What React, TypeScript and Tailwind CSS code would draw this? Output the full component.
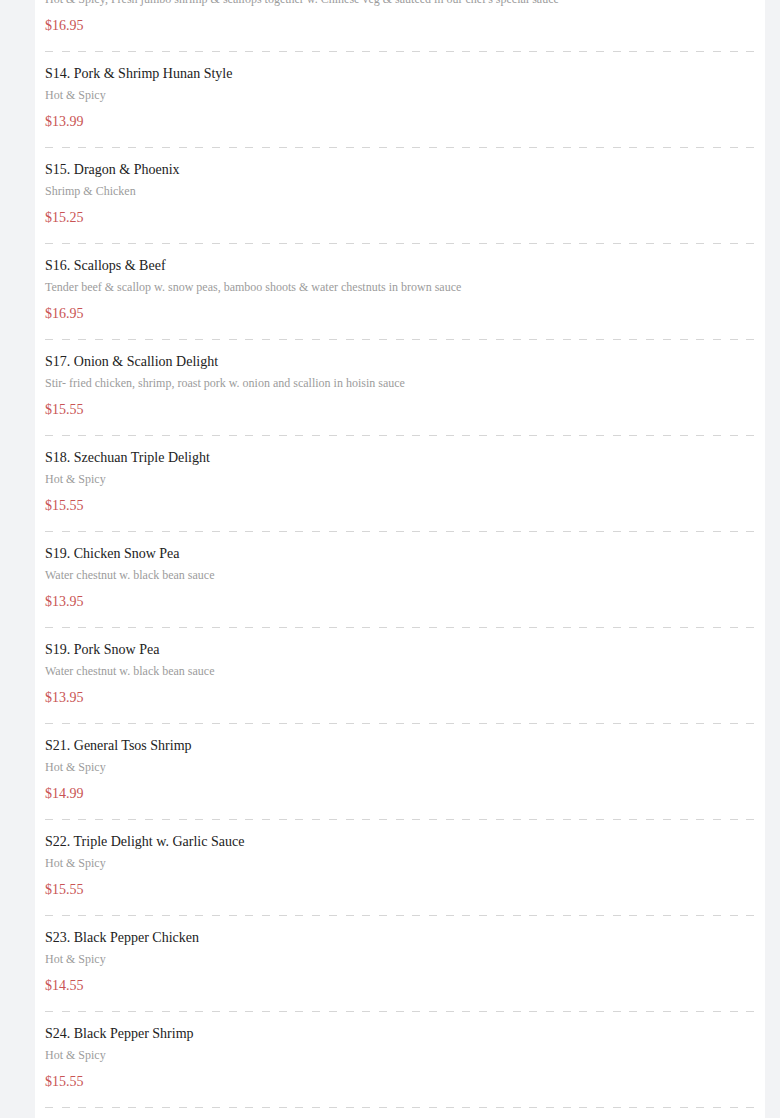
import React from "react";

type Item = { name: string; desc: string; price: string };

const items: Item[] = [
  {
    name: "S13. Scallops & Shrimp Szechuan Style",
    desc: "Hot & Spicy, Fresh jumbo shrimp & scallops together w. Chinese veg & sauteed in our chef's special sauce",
    price: "$16.95",
  },
  { name: "S14. Pork & Shrimp Hunan Style", desc: "Hot & Spicy", price: "$13.99" },
  { name: "S15. Dragon & Phoenix", desc: "Shrimp & Chicken", price: "$15.25" },
  {
    name: "S16. Scallops & Beef",
    desc: "Tender beef & scallop w. snow peas, bamboo shoots & water chestnuts in brown sauce",
    price: "$16.95",
  },
  {
    name: "S17. Onion & Scallion Delight",
    desc: "Stir- fried chicken, shrimp, roast pork w. onion and scallion in hoisin sauce",
    price: "$15.55",
  },
  { name: "S18. Szechuan Triple Delight", desc: "Hot & Spicy", price: "$15.55" },
  { name: "S19. Chicken Snow Pea", desc: "Water chestnut w. black bean sauce", price: "$13.95" },
  { name: "S19. Pork Snow Pea", desc: "Water chestnut w. black bean sauce", price: "$13.95" },
  { name: "S21. General Tsos Shrimp", desc: "Hot & Spicy", price: "$14.99" },
  { name: "S22. Triple Delight w. Garlic Sauce", desc: "Hot & Spicy", price: "$15.55" },
  { name: "S23. Black Pepper Chicken", desc: "Hot & Spicy", price: "$14.55" },
  { name: "S24. Black Pepper Shrimp", desc: "Hot & Spicy", price: "$15.55" },
];

function MenuItem({ item }: { item: Item }) {
  return (
    <div className="px-[10px]">
      <div className="flex flex-col pt-[12px] pb-[15px]">
        <div className="text-[14px] leading-[20px] text-[#222]">{item.name}</div>
        <div className="mt-[3px] text-[12px] leading-[16px] text-[#9c9c9c]">{item.desc}</div>
        <div className="mt-[9px] text-[14px] leading-[20px] text-[#c95454]">{item.price}</div>
      </div>
      <div className="h-px w-[712px] bg-[repeating-linear-gradient(90deg,#d6d6d6_0_8px,transparent_8px_16.7px)]" />
    </div>
  );
}

export default function App() {
  return (
    <div
      className="h-[1118px] overflow-hidden bg-[#f2f3f5]"
      style={{ fontFamily: '"Liberation Serif", "Times New Roman", serif' }}
    >
      <div className="ml-[35px] w-[730px] bg-white mt-[-44px] pb-[40px]">
        {items.map((it, i) => (
          <MenuItem key={i} item={it} />
        ))}
      </div>
    </div>
  );
}
